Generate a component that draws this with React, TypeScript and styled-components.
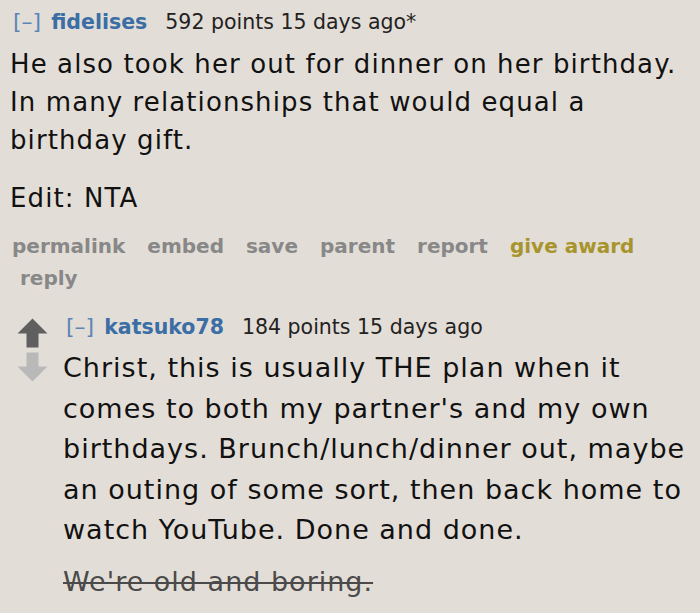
import React from "react";
import styled, { createGlobalStyle } from "styled-components";

const Global = createGlobalStyle`
  html, body { margin: 0; padding: 0; background: #e3ddd7; }
  body { font-family: "DejaVu Sans", Verdana, sans-serif; }
`;

const Page = styled.div`
  width: 700px;
  height: 613px;
  overflow: hidden;
  background: #e3ddd7;
  padding: 8px 0 0 10px;
  box-sizing: border-box;
`;

const Tagline = styled.div`
  display: flex;
  align-items: baseline;
  height: 28px;
  font-size: 20.5px;
  line-height: 28px;
  color: #222;
  white-space: nowrap;
`;

const Collapse = styled.span`
  color: #5a86b6;
  font-size: 22px;
  padding-left: 3px;
  margin-right: 10px;
`;

const Author = styled.span`
  color: #3a6ea5;
  font-weight: bold;
  font-size: 20.5px;
  margin-right: 18px;
`;

const Body = styled.div<{ $fs: number; $lh: number; $mt: number; $ls: number }>`
  font-size: ${(p) => p.$fs}px;
  letter-spacing: ${(p) => p.$ls}px;
  line-height: ${(p) => p.$lh}px;
  color: #111;
  white-space: nowrap;
  margin-top: ${(p) => p.$mt}px;
`;

const Para = styled.p<{ $mt?: number; $struck?: boolean }>`
  margin: ${(p) => p.$mt ?? 0}px 0 0 0;
  ${(p) =>
    p.$struck
      ? "text-decoration: line-through; text-decoration-thickness: 2px; color: #4a4a4a;"
      : ""}
`;

const Buttons = styled.div`
  display: flex;
  flex-wrap: wrap;
  column-gap: 22px;
  width: 640px;
  margin-top: 13px;
  padding-left: 2px;
  font-size: 20px;
  line-height: 32px;
  font-weight: bold;
`;

const Btn = styled.span<{ $gold?: boolean }>`
  color: ${(p) => (p.$gold ? "#a8942c" : "#888")};
  &:last-child { padding-left: 8px; }
`;

const Child = styled.div`
  display: flex;
  margin-top: 19px;
  margin-left: 7px;
`;

const Votes = styled.div`
  display: flex;
  flex-direction: column;
  align-items: center;
  width: 31px;
  padding-top: 5px;
  gap: 4px;
  margin-right: 15px;
`;

const Entry = styled.div`
  flex: 1;
`;

const Arrow = ({ up, color }: { up?: boolean; color: string }) => (
  <svg width="31" height="30" viewBox="0 0 31 30">
    <path
      d="M15.5 0.5 L30.5 15.5 L21.5 15.5 L21.5 29.5 L9.5 29.5 L9.5 15.5 L0.5 15.5 Z"
      fill={color}
      transform={up ? undefined : "rotate(180 15.5 15)"}
    />
  </svg>
);

export default function App() {
  return (
    <Page>
      <Global />
      <Tagline>
        <Collapse>[–]</Collapse>
        <Author>fidelises</Author>
        <span>592 points 15 days ago*</span>
      </Tagline>
      <Body $fs={26} $lh={38} $mt={9} $ls={1.1}>
        <Para>
          He also took her out for dinner on her birthday.
          <br />
          In many relationships that would equal a
          <br />
          birthday gift.
        </Para>
        <Para $mt={20}>Edit: NTA</Para>
      </Body>
      <Buttons>
        <Btn>permalink</Btn>
        <Btn>embed</Btn>
        <Btn>save</Btn>
        <Btn>parent</Btn>
        <Btn>report</Btn>
        <Btn $gold>give award</Btn>
        <Btn>reply</Btn>
      </Buttons>
      <Child>
        <Votes>
          <Arrow up color="#5f5f5f" />
          <Arrow color="#b9b9b9" />
        </Votes>
        <Entry>
          <Tagline>
            <Collapse>[–]</Collapse>
            <Author>katsuko78</Author>
            <span>184 points 15 days ago</span>
          </Tagline>
          <Body $fs={27} $lh={40.5} $mt={7} $ls={1}>
            <Para>
              Christ, this is usually THE plan when it
              <br />
              comes to both my partner's and my own
              <br />
              birthdays. Brunch/lunch/dinner out, maybe
              <br />
              an outing of some sort, then back home to
              <br />
              watch YouTube. Done and done.
            </Para>
            <Para $mt={11} $struck>
              We're old and boring.
            </Para>
          </Body>
        </Entry>
      </Child>
    </Page>
  );
}
